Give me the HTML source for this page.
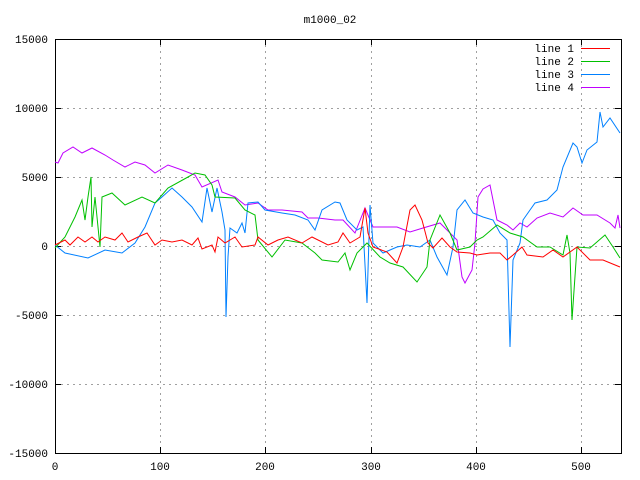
<!DOCTYPE html>
<html><head><style>body{margin:0;background:#fff}svg{display:block}text{font-family:"Liberation Mono","DejaVu Sans Mono",monospace;font-size:11px;fill:#000}</style></head><body>
<svg width="640" height="480" xmlns="http://www.w3.org/2000/svg">
<rect width="640" height="480" fill="#fff"/>
<g stroke="#a0a0a0" stroke-dasharray="2,4" stroke-width="1">
<line x1="55" y1="108.5" x2="621" y2="108.5"/><line x1="55" y1="177.5" x2="621" y2="177.5"/><line x1="55" y1="246.5" x2="621" y2="246.5"/><line x1="55" y1="315.5" x2="621" y2="315.5"/><line x1="55" y1="384.5" x2="621" y2="384.5"/>
<line x1="160.5" y1="39" x2="160.5" y2="453"/><line x1="265.5" y1="39" x2="265.5" y2="453"/><line x1="371.5" y1="39" x2="371.5" y2="453"/><line x1="476.5" y1="39" x2="476.5" y2="453"/><line x1="581.5" y1="39" x2="581.5" y2="453"/>
</g>
<g stroke="#000" stroke-width="1">
<rect x="55.5" y="39.5" width="566" height="414" fill="none"/>
<path d="M55 108.5h6M55 177.5h6M55 246.5h6M55 315.5h6M55 384.5h6M621 108.5h-6M621 177.5h-6M621 246.5h-6M621 315.5h-6M621 384.5h-6M160.5 453v-6M265.5 453v-6M371.5 453v-6M476.5 453v-6M581.5 453v-6M160.5 39v6M265.5 39v6M371.5 39v6M476.5 39v6M581.5 39v6"/>
</g>
<g text-anchor="end">
<text x="48" y="43">15000</text><text x="48" y="112">10000</text><text x="48" y="181">5000</text><text x="48" y="250">0</text><text x="48" y="319">-5000</text><text x="48" y="388">-10000</text><text x="48" y="457">-15000</text>
</g>
<g text-anchor="middle">
<text x="55" y="470">0</text><text x="160" y="470">100</text><text x="265" y="470">200</text><text x="371" y="470">300</text><text x="476" y="470">400</text><text x="581" y="470">500</text>
<text x="330" y="23">m1000_02</text>
</g>
<g text-anchor="end"><text x="574" y="52">line 1</text><text x="574" y="65">line 2</text><text x="574" y="78">line 3</text><text x="574" y="91">line 4</text></g>
<g fill="none" stroke-width="1">
<line x1="581" y1="48.5" x2="610" y2="48.5" stroke="#ff0000"/>
<line x1="581" y1="61.5" x2="610" y2="61.5" stroke="#00c000"/>
<line x1="581" y1="74.5" x2="610" y2="74.5" stroke="#0080ff"/>
<line x1="581" y1="87.5" x2="610" y2="87.5" stroke="#c000ff"/>
<polyline stroke="#c000ff" points="55,162 58,163 63,153 73,147 82,153 92,148 105,155 113,160 125,167 135,162 145,165 155,173 168,165 182,170 195,175 202,187 218,180 222,192 235,197 245,205 258,203 268,210 282,210 302,212 308,218 318,218 335,220 343,220 355,233 365,208 373,227 397,227 410,232 423,228 440,223 450,233 457,240 462,277 465,283 472,270 475,243 478,197 483,189 490,185 493,200 497,220 507,225 513,230 520,223 527,227 537,218 550,213 563,217 573,208 583,215 597,215 610,223 615,228 618,215 620,228"/>
<polyline stroke="#0080ff" points="55,245 65,253 88,258 105,250 122,253 135,243 145,227 155,203 162,197 172,188 182,197 192,207 202,222 207,188 212,212 217,188 222,212 225,230 226,317 228,257 230,228 237,233 242,223 245,233 248,203 258,202 265,210 282,213 295,215 308,220 315,230 322,210 335,202 340,203 347,220 357,230 363,227 367,303 370,205 373,243 383,253 397,247 407,245 420,247 430,240 437,257 447,275 453,247 457,210 465,200 473,213 483,217 493,220 500,233 507,240 510,347 513,260 520,243 523,220 530,210 535,203 547,200 557,190 563,167 573,143 577,147 582,163 587,150 597,142 600,112 603,127 610,118 620,133"/>
<polyline stroke="#00c000" points="55,248 65,237 75,217 82,200 85,220 88,197 91,177 92,227 95,197 100,247 102,197 112,193 125,205 142,197 155,203 168,188 188,177 195,173 205,175 212,185 215,197 235,198 245,210 255,215 258,240 272,257 285,240 302,243 315,253 322,260 338,262 345,253 350,270 357,253 367,243 380,257 390,263 403,267 417,282 427,267 430,240 440,215 450,233 457,250 470,247 477,240 483,237 497,225 510,233 523,237 537,247 550,247 563,255 567,235 570,253 572,320 577,247 590,248 605,235 613,247 620,258"/>
<polyline stroke="#ff0000" points="55,245 65,240 70,245 78,237 85,242 92,237 98,242 105,237 115,240 122,233 128,242 138,237 147,233 155,245 162,240 172,242 182,240 192,245 198,238 202,249 212,245 215,252 218,237 225,243 235,237 242,247 255,245 258,237 268,245 278,240 288,237 302,243 312,237 328,245 338,242 343,233 350,243 360,237 365,208 368,233 373,247 387,252 397,263 403,247 410,210 415,205 422,220 428,243 433,248 442,238 450,247 457,252 470,253 477,255 490,253 500,253 507,260 513,255 522,247 527,255 543,257 553,250 563,257 577,247 590,260 603,260 620,267"/>
</g>
</svg>
</body></html>
